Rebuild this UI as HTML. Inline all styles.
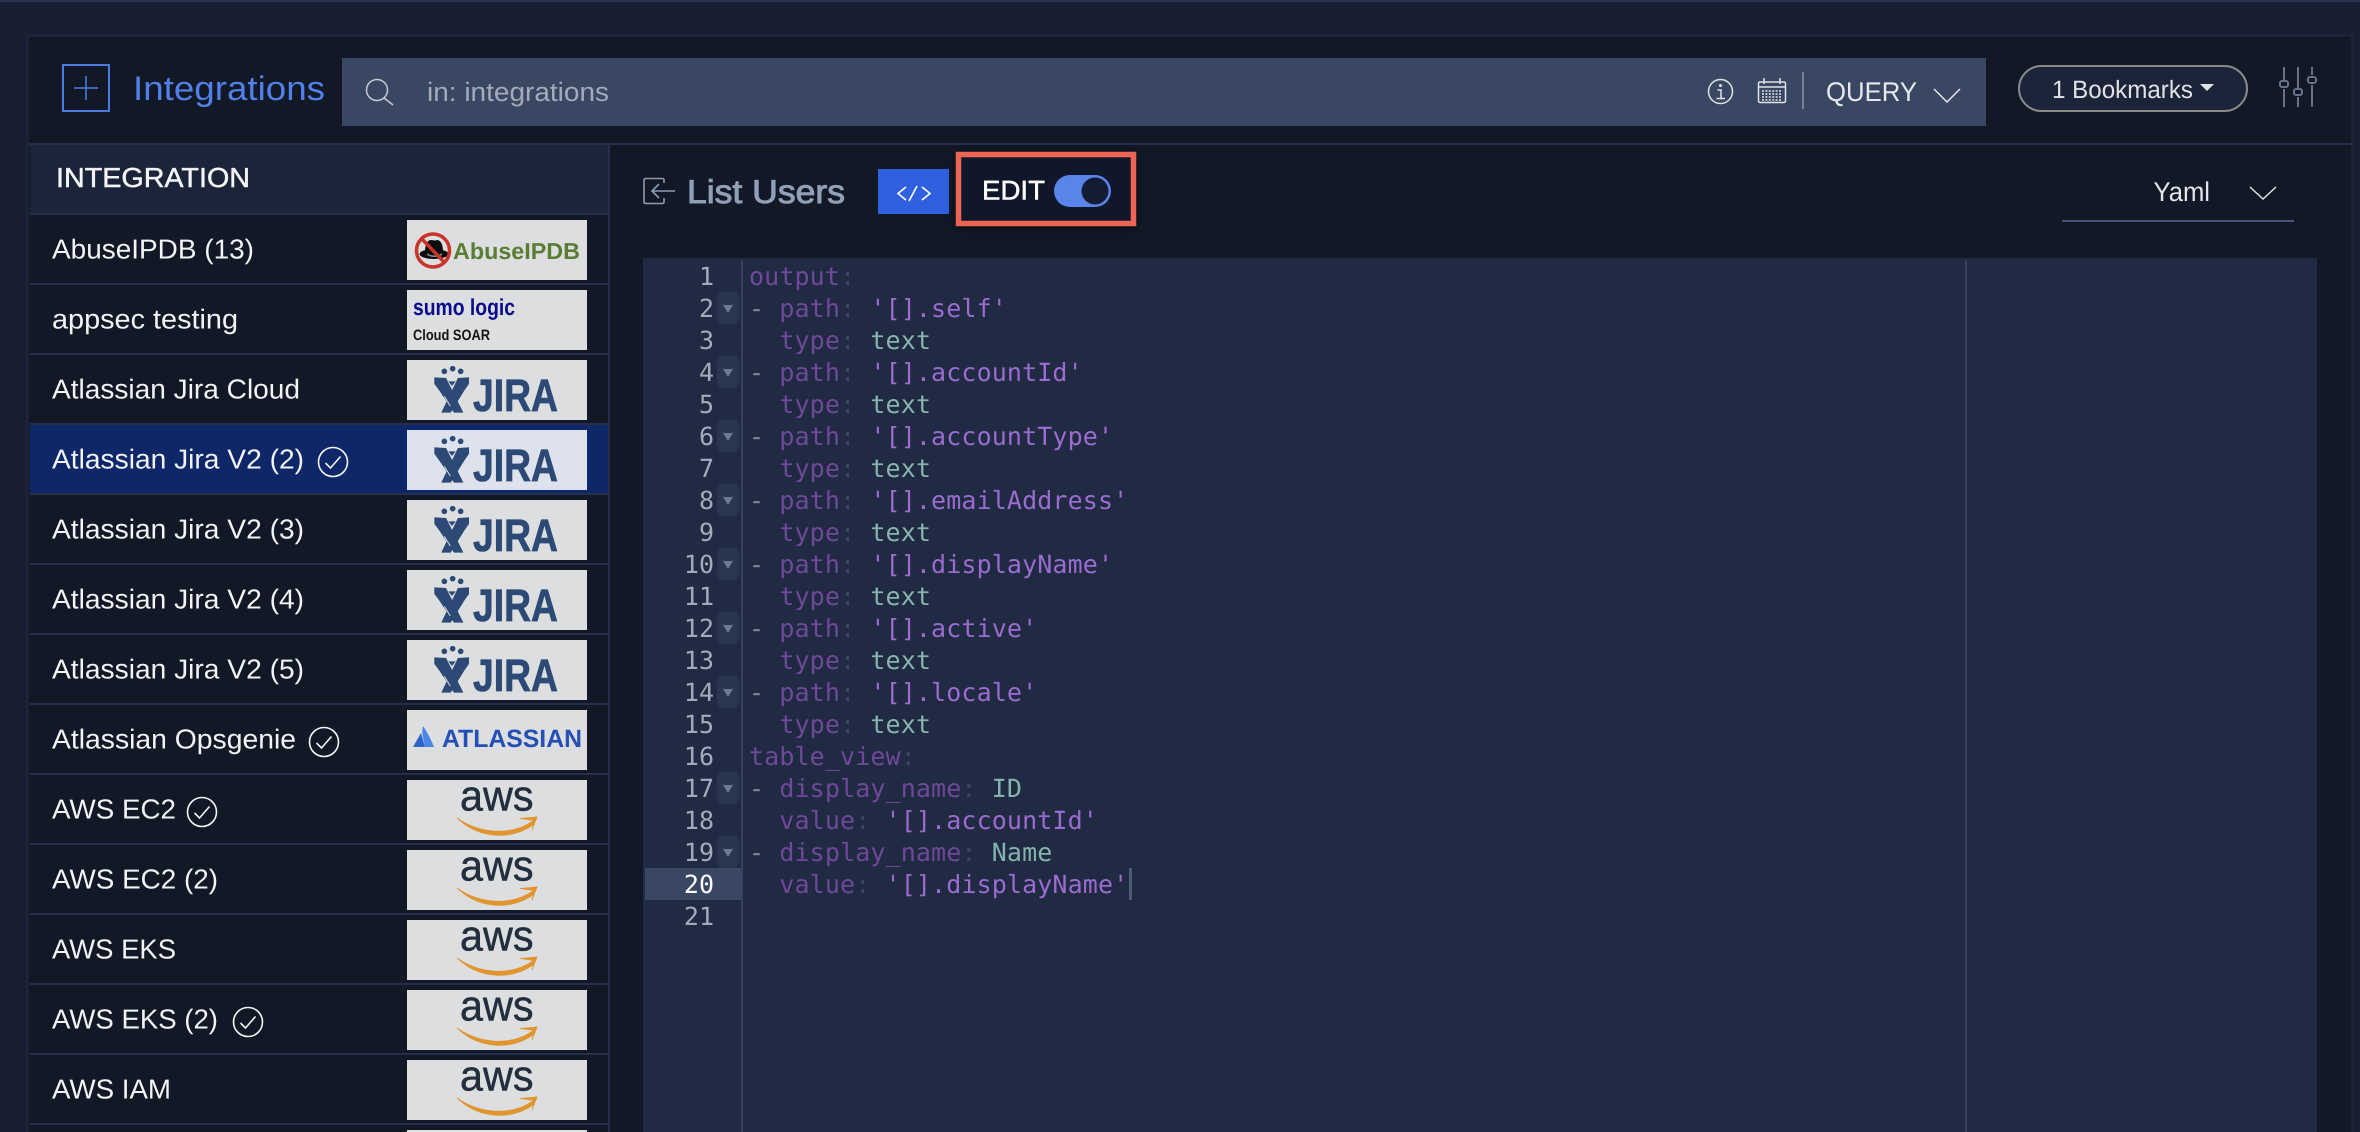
<!DOCTYPE html>
<html><head><meta charset="utf-8"><title>Integrations</title>
<style>
html,body{margin:0;padding:0;background:#181f33;width:2360px;height:1132px;overflow:hidden}
svg{display:block}
text{font-family:"Liberation Sans",sans-serif;text-rendering:geometricPrecision}
.r{font-size:27.5px;fill:#f2f4f7;stroke:none}
.c text,text.c{font-family:"DejaVu Sans Mono",monospace;font-size:25px;white-space:pre;letter-spacing:.12px}
.n{font-family:"DejaVu Sans Mono",monospace;font-size:25px;fill:#a4abb8;text-anchor:end}
.k{fill:#70489a}.o{fill:#3b4664}.d{fill:#838c9e}.s{fill:#9b6bd0}.v{fill:#85b4ae}
.jt{font-size:45.5px;font-weight:bold;fill:#2c4a75;stroke:#2c4a75;stroke-width:.7px}
.at{font-size:43px;fill:#232f3e;stroke:#232f3e;stroke-width:.5px}
</style></head><body>
<svg width="2360" height="1132" viewBox="0 0 2360 1132" xmlns="http://www.w3.org/2000/svg">
<defs>
<g id="jira-mark">
<g transform="translate(425,2) scale(.3333)">
<circle cx="58" cy="28" r="8.500"/><circle cx="83" cy="20" r="8.500"/><circle cx="107" cy="28" r="8.500"/>
<path d="M30 48L62 50L112 150L88 150L45 85L30 65Z" stroke="#2c4a75" stroke-width="4"/>
<path d="M130 48L100 50L52 150L76 150L118 82L130 65Z" stroke="#2c4a75" stroke-width="4"/>
<path d="M70 58H92L81 72Z"/>
<path d="M58 103L76 132" stroke="#dcdee0" stroke-width="3" fill="none"/>
</g>
</g>
<g id="aws-smile">
<path d="M457 18C478 33 510 37 533 21L534 24C513 40 480 40 457 18Z" fill="#e0952f" stroke="#e0952f" stroke-width=".8"/>
<path d="M520 18.500L537 17L532 30C533 26 534 23 534 20.500Z" fill="#e0952f" stroke="#e0952f" stroke-width=".8"/>
</g>
<g id="chk" fill="none" stroke="#f2f4f7" stroke-width="1.6">
<circle cx="0" cy="0" r="14.5"/><path d="M-7.5 1L-2.5 6L7.5 -5.5"/>
</g>
</defs>

<rect width="2360" height="1132" fill="#181f33"/>
<rect width="2360" height="2" fill="#2a3450"/>
<rect x="26" y="34" width="2328" height="1098" fill="#1b2339"/>
<rect x="29" y="37" width="2322" height="1095" fill="#121826"/>

<!-- header -->
<rect x="63" y="65" width="46" height="46" fill="none" stroke="#4a7de0" stroke-width="2"/>
<path d="M74 88H98M86 76V100" stroke="#4a7de0" stroke-width="1.5" fill="none"/>
<text x="133" y="100" font-size="34" fill="#5080e8" textLength="192" lengthAdjust="spacingAndGlyphs">Integrations</text>
<rect x="342" y="58" width="1644" height="68" fill="#3a4763"/>
<g fill="none" stroke="#c5cad3" stroke-width="1.5"><circle cx="377" cy="90" r="10.5"/><path d="M384 98L393 105"/></g>
<text x="427" y="101" font-size="26.5" fill="#a3abba" textLength="182" lengthAdjust="spacingAndGlyphs">in: integrations</text>
<g fill="none" stroke="#dfe2e8" stroke-width="1.5">
<circle cx="1720.5" cy="91.5" r="12"/><path d="M1717.500 90H1721V98.500M1716.500 98.500H1725"/>
<rect x="1758.5" y="82" width="27" height="20.5" rx="1.5"/><path d="M1758.5 87H1785.5M1764 78V84M1780 78V84"/>
<path d="M1762 91H1782M1762 94H1782M1762 97H1782M1762 100H1782" stroke-dasharray="2 1.4" stroke-width="1.6"/>
</g>
<circle cx="1720.5" cy="85.500" r="1.500" fill="#dfe2e8"/>
<rect x="1802" y="72" width="2" height="37" fill="#77829a"/>
<text x="1826" y="101" font-size="27" fill="#e6e8ec" textLength="91" lengthAdjust="spacingAndGlyphs">QUERY</text>
<path d="M1934 89L1947 102L1960 89" fill="none" stroke="#e6e8ec" stroke-width="1.5"/>

<rect x="2019" y="66" width="228" height="45" rx="22.5" fill="#1c2439" stroke="#8a8a8a" stroke-width="2"/>
<text x="2052" y="98" font-size="25" fill="#e0e2e6" textLength="141" lengthAdjust="spacingAndGlyphs">1 Bookmarks</text>
<path d="M2200 84H2214L2207 91Z" fill="#e0e2e6"/>
<g fill="none" stroke="#687286" stroke-width="2">
<path d="M2284 67V80M2284 89V107M2298 67V88M2298 97V107M2312 67V75M2312 85V107"/>
<rect x="2280" y="81" width="8" height="6" rx="2"/><rect x="2294" y="89" width="8" height="6" rx="2"/><rect x="2308" y="77" width="8" height="6" rx="2"/>
</g>
<rect x="29" y="143" width="2322" height="2" fill="#252f4c"/>

<!-- sidebar -->
<rect x="30" y="145" width="578" height="68" fill="#1c2439"/>
<text x="56" y="187" font-size="27.5" fill="#f5f6f8" stroke="#f5f6f8" stroke-width=".45" textLength="194" lengthAdjust="spacingAndGlyphs">INTEGRATION</text>
<rect x="608" y="145" width="2" height="987" fill="#252f4c"/>
<rect x="30" y="425" width="578" height="68" fill="#0d2769"/>
<g fill="#252f4c">
<rect x="30" y="213" width="578" height="2"/><rect x="30" y="283" width="578" height="2"/><rect x="30" y="353" width="578" height="2"/><rect x="30" y="423" width="578" height="2"/><rect x="30" y="493" width="578" height="2"/><rect x="30" y="563" width="578" height="2"/><rect x="30" y="633" width="578" height="2"/><rect x="30" y="703" width="578" height="2"/><rect x="30" y="773" width="578" height="2"/><rect x="30" y="843" width="578" height="2"/><rect x="30" y="913" width="578" height="2"/><rect x="30" y="983" width="578" height="2"/><rect x="30" y="1053" width="578" height="2"/><rect x="30" y="1123" width="578" height="2"/>
</g>
<text class="r" x="52" y="258.500" textLength="202" lengthAdjust="spacingAndGlyphs">AbuseIPDB (13)</text>
<text class="r" x="52" y="328.500" textLength="186" lengthAdjust="spacingAndGlyphs">appsec testing</text>
<text class="r" x="52" y="398.500" textLength="248" lengthAdjust="spacingAndGlyphs">Atlassian Jira Cloud</text>
<text class="r" x="52" y="468.500" textLength="252" lengthAdjust="spacingAndGlyphs">Atlassian Jira V2 (2)</text>
<text class="r" x="52" y="538.500" textLength="252" lengthAdjust="spacingAndGlyphs">Atlassian Jira V2 (3)</text>
<text class="r" x="52" y="608.500" textLength="252" lengthAdjust="spacingAndGlyphs">Atlassian Jira V2 (4)</text>
<text class="r" x="52" y="678.500" textLength="252" lengthAdjust="spacingAndGlyphs">Atlassian Jira V2 (5)</text>
<text class="r" x="52" y="748.500" textLength="244" lengthAdjust="spacingAndGlyphs">Atlassian Opsgenie</text>
<text class="r" x="52" y="818.500" textLength="124" lengthAdjust="spacingAndGlyphs">AWS EC2</text>
<text class="r" x="52" y="888.500" textLength="166" lengthAdjust="spacingAndGlyphs">AWS EC2 (2)</text>
<text class="r" x="52" y="958.500" textLength="124" lengthAdjust="spacingAndGlyphs">AWS EKS</text>
<text class="r" x="52" y="1028.500" textLength="166" lengthAdjust="spacingAndGlyphs">AWS EKS (2)</text>
<text class="r" x="52" y="1098.500" textLength="119" lengthAdjust="spacingAndGlyphs">AWS IAM</text>
<use href="#chk" x="333" y="462"/><use href="#chk" x="324" y="742"/><use href="#chk" x="202" y="812"/><use href="#chk" x="248" y="1022"/>

<!-- logos -->
<g fill="#dcdee0">
<rect x="407" y="220" width="180" height="60"/><rect x="407" y="290" width="180" height="60"/><rect x="407" y="360" width="180" height="60"/><rect x="407" y="430" width="180" height="60" fill="#dde2ec"/><rect x="407" y="500" width="180" height="60"/><rect x="407" y="570" width="180" height="60"/><rect x="407" y="640" width="180" height="60"/><rect x="407" y="710" width="180" height="60"/><rect x="407" y="780" width="180" height="60"/><rect x="407" y="850" width="180" height="60"/><rect x="407" y="920" width="180" height="60"/><rect x="407" y="990" width="180" height="60"/><rect x="407" y="1060" width="180" height="60"/><rect x="407" y="1130" width="180" height="2"/>
</g>
<!-- abuseipdb -->
<ellipse cx="434" cy="254" rx="14.500" ry="5" fill="#0c0c0c"/>
<path d="M425 252C425 245 427 240 431 240C433 240 435 241 437 240C441 240 443 245 443 252Z" fill="#0c0c0c"/>
<path d="M427 254C431 257 438 257 442 254" stroke="#8d8d8d" stroke-width="1.500" fill="none"/>
<circle cx="433" cy="250.500" r="16.500" fill="none" stroke="#c8342a" stroke-width="3.500"/>
<path d="M421.500 238.500L444.500 262.500" stroke="#c8342a" stroke-width="3.500"/>
<text x="453" y="259" font-size="23" font-weight="bold" fill="#5a7d33" textLength="127" lengthAdjust="spacingAndGlyphs">AbuseIPDB</text>
<!-- sumo -->
<text x="413" y="315" font-size="23" font-weight="bold" fill="#0a0a8c" textLength="102" lengthAdjust="spacingAndGlyphs">sumo logic</text>
<text x="413" y="340" font-size="15" font-weight="bold" fill="#151515" textLength="77" lengthAdjust="spacingAndGlyphs">Cloud SOAR</text>
<!-- jira -->
<g fill="#2c4a75">
<use href="#jira-mark" y="360"/><use href="#jira-mark" y="430"/><use href="#jira-mark" y="500"/><use href="#jira-mark" y="570"/><use href="#jira-mark" y="640"/>
</g>
<text class="jt" x="473" y="411" textLength="85" lengthAdjust="spacingAndGlyphs">JIRA</text>
<text class="jt" x="473" y="481" textLength="85" lengthAdjust="spacingAndGlyphs">JIRA</text>
<text class="jt" x="473" y="551" textLength="85" lengthAdjust="spacingAndGlyphs">JIRA</text>
<text class="jt" x="473" y="621" textLength="85" lengthAdjust="spacingAndGlyphs">JIRA</text>
<text class="jt" x="473" y="691" textLength="85" lengthAdjust="spacingAndGlyphs">JIRA</text>
<!-- atlassian -->
<path d="M413 747L421 733L425 747Z" fill="#2f63c8"/><path d="M423 726C428 733 432 742 434 747H425C424 740 421 734 423 726Z" fill="#4a86e8"/>
<text x="442" y="747" font-size="25" font-weight="bold" fill="#2450b5" textLength="140" lengthAdjust="spacingAndGlyphs">ATLASSIAN</text>
<!-- aws -->
<text class="at" x="460" y="810.500" textLength="73.500" lengthAdjust="spacingAndGlyphs">aws</text>
<text class="at" x="460" y="880.500" textLength="73.500" lengthAdjust="spacingAndGlyphs">aws</text>
<text class="at" x="460" y="950.500" textLength="73.500" lengthAdjust="spacingAndGlyphs">aws</text>
<text class="at" x="460" y="1020.500" textLength="73.500" lengthAdjust="spacingAndGlyphs">aws</text>
<text class="at" x="460" y="1090.500" textLength="73.500" lengthAdjust="spacingAndGlyphs">aws</text>
<use href="#aws-smile" y="800"/><use href="#aws-smile" y="870"/><use href="#aws-smile" y="940"/><use href="#aws-smile" y="1010"/><use href="#aws-smile" y="1080"/>

<!-- detail head -->
<g fill="none" stroke="#8d9cb3" stroke-width="1.6">
<path d="M664 183V180Q664 178.500 662 178.500H646Q644 178.500 644 180V202Q644 203.500 646 203.500H662Q664 203.500 664 202V198"/>
<path d="M675 191H652M659 184L652 191L659 198"/>
</g>
<text x="687" y="203" font-size="33" fill="#8fa0b8" stroke="#8fa0b8" stroke-width=".9" textLength="158" lengthAdjust="spacingAndGlyphs">List Users</text>
<rect x="878" y="169" width="71" height="45" fill="#2e60e0"/>
<path d="M906 187L898 193.500L906 200M922 187L930 193.500L922 200M917 186L909 201" fill="none" stroke="#fff" stroke-width="1.6"/>
<rect x="958.500" y="154.500" width="175" height="69" fill="#10172a" stroke="#ec6455" stroke-width="5.500" style="filter:drop-shadow(0 2px 4px rgba(0,0,0,.55))"/>
<text x="982" y="199.500" font-size="27" fill="#fff" stroke="#fff" stroke-width=".5" textLength="63" lengthAdjust="spacingAndGlyphs">EDIT</text>
<rect x="1054" y="175" width="57" height="32" rx="16" fill="#5a84ea"/>
<circle cx="1095" cy="191" r="13.500" fill="#141c33"/>
<text x="2153.500" y="201" font-size="27" fill="#e2e4e9" textLength="56.500" lengthAdjust="spacingAndGlyphs">Yaml</text>
<path d="M2250 187L2263 199L2276 187" fill="none" stroke="#e2e4e9" stroke-width="1.4"/>
<rect x="2062" y="220" width="232" height="2" fill="#46547a"/>

<!-- editor -->
<rect x="643" y="258" width="1674" height="874" fill="#202a43"/>
<rect x="645" y="868" width="96" height="32" fill="#3a4763"/>
<rect x="741" y="260" width="2" height="872" fill="#35415f"/>
<rect x="1965" y="260" width="2" height="872" fill="#35415f"/>
<g fill="#2a3550">
<rect x="717" y="292" width="22" height="32" rx="7"/><rect x="717" y="356" width="22" height="32" rx="7"/><rect x="717" y="420" width="22" height="32" rx="7"/><rect x="717" y="484" width="22" height="32" rx="7"/><rect x="717" y="548" width="22" height="32" rx="7"/><rect x="717" y="612" width="22" height="32" rx="7"/><rect x="717" y="676" width="22" height="32" rx="7"/><rect x="717" y="772" width="22" height="32" rx="7"/><rect x="717" y="836" width="22" height="32" rx="7"/>
</g>
<g fill="#6d7890">
<path d="M723 305H733L728 313Z"/><path d="M723 369H733L728 377Z"/><path d="M723 433H733L728 441Z"/><path d="M723 497H733L728 505Z"/><path d="M723 561H733L728 569Z"/><path d="M723 625H733L728 633Z"/><path d="M723 689H733L728 697Z"/><path d="M723 785H733L728 793Z"/><path d="M723 849H733L728 857Z"/>
</g>
<text class="n" x="714" y="285">1</text><text class="n" x="714" y="317">2</text><text class="n" x="714" y="349">3</text><text class="n" x="714" y="381">4</text><text class="n" x="714" y="413">5</text><text class="n" x="714" y="445">6</text><text class="n" x="714" y="477">7</text><text class="n" x="714" y="509">8</text><text class="n" x="714" y="541">9</text><text class="n" x="714" y="573">10</text><text class="n" x="714" y="605">11</text><text class="n" x="714" y="637">12</text><text class="n" x="714" y="669">13</text><text class="n" x="714" y="701">14</text><text class="n" x="714" y="733">15</text><text class="n" x="714" y="765">16</text><text class="n" x="714" y="797">17</text><text class="n" x="714" y="829">18</text><text class="n" x="714" y="861">19</text><text class="n" x="714" y="893" style="fill:#fff">20</text><text class="n" x="714" y="925">21</text>
<g class="c">
<text x="749" y="285"><tspan class="k">output</tspan><tspan class="o">:</tspan></text>
<text x="749" y="317"><tspan class="d">- </tspan><tspan class="k">path</tspan><tspan class="o">: </tspan><tspan class="s">'[].self'</tspan></text>
<text x="749" y="349"><tspan class="k">  type</tspan><tspan class="o">: </tspan><tspan class="v">text</tspan></text>
<text x="749" y="381"><tspan class="d">- </tspan><tspan class="k">path</tspan><tspan class="o">: </tspan><tspan class="s">'[].accountId'</tspan></text>
<text x="749" y="413"><tspan class="k">  type</tspan><tspan class="o">: </tspan><tspan class="v">text</tspan></text>
<text x="749" y="445"><tspan class="d">- </tspan><tspan class="k">path</tspan><tspan class="o">: </tspan><tspan class="s">'[].accountType'</tspan></text>
<text x="749" y="477"><tspan class="k">  type</tspan><tspan class="o">: </tspan><tspan class="v">text</tspan></text>
<text x="749" y="509"><tspan class="d">- </tspan><tspan class="k">path</tspan><tspan class="o">: </tspan><tspan class="s">'[].emailAddress'</tspan></text>
<text x="749" y="541"><tspan class="k">  type</tspan><tspan class="o">: </tspan><tspan class="v">text</tspan></text>
<text x="749" y="573"><tspan class="d">- </tspan><tspan class="k">path</tspan><tspan class="o">: </tspan><tspan class="s">'[].displayName'</tspan></text>
<text x="749" y="605"><tspan class="k">  type</tspan><tspan class="o">: </tspan><tspan class="v">text</tspan></text>
<text x="749" y="637"><tspan class="d">- </tspan><tspan class="k">path</tspan><tspan class="o">: </tspan><tspan class="s">'[].active'</tspan></text>
<text x="749" y="669"><tspan class="k">  type</tspan><tspan class="o">: </tspan><tspan class="v">text</tspan></text>
<text x="749" y="701"><tspan class="d">- </tspan><tspan class="k">path</tspan><tspan class="o">: </tspan><tspan class="s">'[].locale'</tspan></text>
<text x="749" y="733"><tspan class="k">  type</tspan><tspan class="o">: </tspan><tspan class="v">text</tspan></text>
<text x="749" y="765"><tspan class="k">table_view</tspan><tspan class="o">:</tspan></text>
<text x="749" y="797"><tspan class="d">- </tspan><tspan class="k">display_name</tspan><tspan class="o">: </tspan><tspan class="v">ID</tspan></text>
<text x="749" y="829"><tspan class="k">  value</tspan><tspan class="o">: </tspan><tspan class="s">'[].accountId'</tspan></text>
<text x="749" y="861"><tspan class="d">- </tspan><tspan class="k">display_name</tspan><tspan class="o">: </tspan><tspan class="v">Name</tspan></text>
<text x="749" y="893"><tspan class="k">  value</tspan><tspan class="o">: </tspan><tspan class="s">'[].displayName'</tspan></text>
</g>
<rect x="1129" y="868" width="3" height="32" fill="#4a5a78"/>
</svg>
</body></html>
